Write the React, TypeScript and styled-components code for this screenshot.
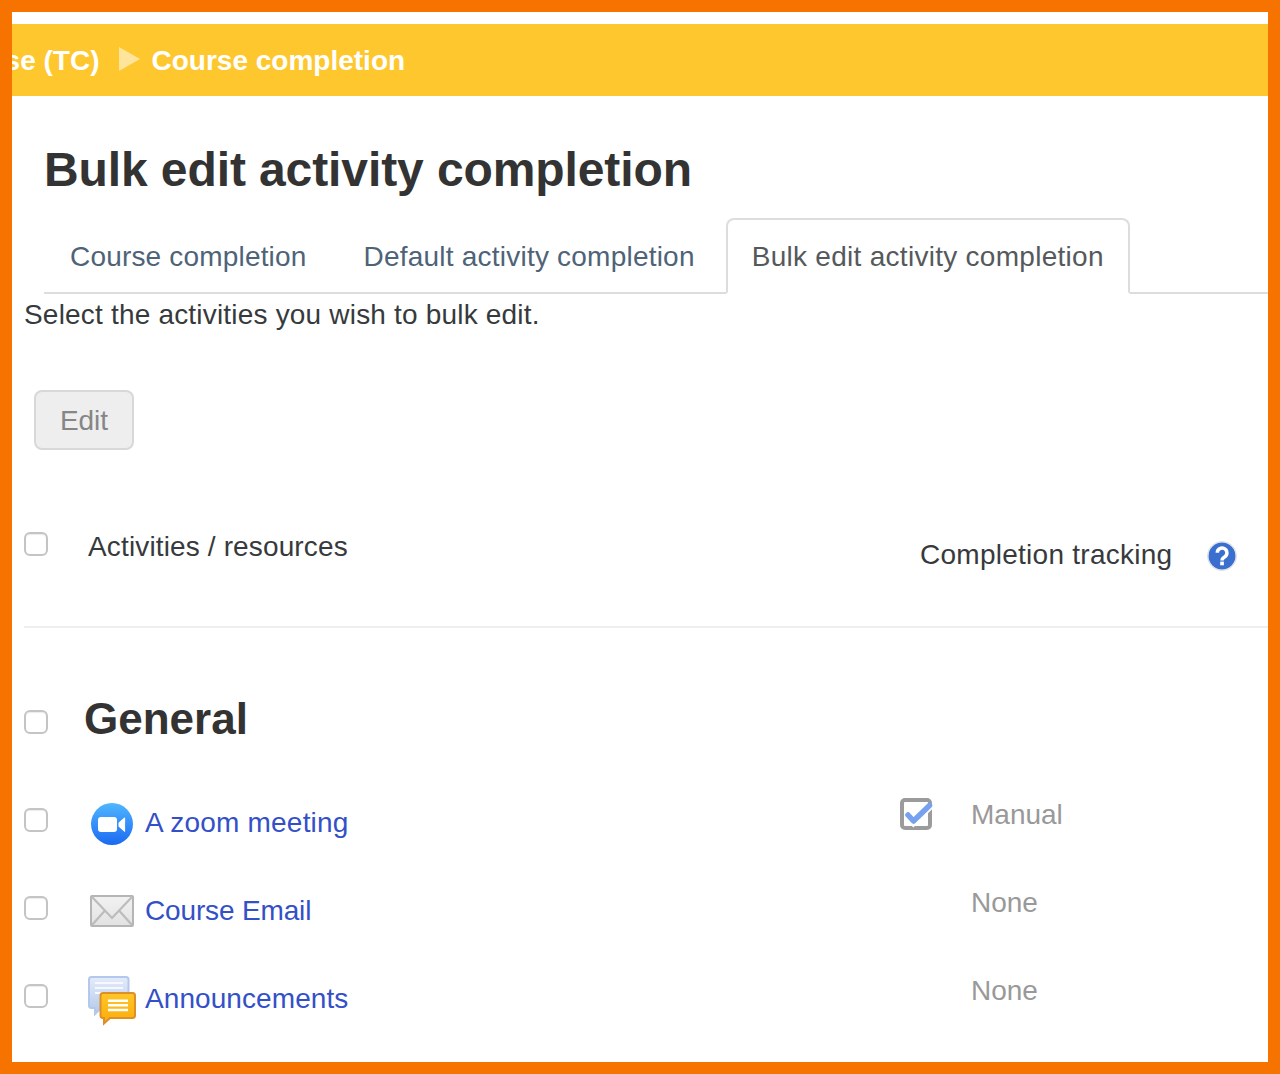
import React from "react";
import styled, { createGlobalStyle } from "styled-components";

const GlobalStyle = createGlobalStyle`
  html, body {
    margin: 0;
    padding: 0;
    background: #fff;
  }
  * {
    box-sizing: border-box;
  }
`;

const Frame = styled.div`
  width: 1280px;
  height: 1074px;
  border: 12px solid #f77300;
  background: #fff;
  overflow: hidden;
  font-family: "Liberation Sans", Arial, sans-serif;
  font-size: 28px;
  line-height: 40px;
  color: #373a3c;
`;

const Breadcrumb = styled.div`
  display: flex;
  align-items: center;
  height: 72px;
  margin-top: 12px;
  padding-top: 2px;
  background: #ffc72e;
  color: #fff;
  font-weight: 700;
  overflow: hidden;
  white-space: nowrap;
`;

const Crumb = styled.span<{ $shift?: number }>`
  margin-left: ${(p) => p.$shift ?? 0}px;
`;

const Separator = styled.span`
  width: 0;
  height: 0;
  margin: 0 12px 5px 19px;
  border-style: solid;
  border-width: 12.5px 0 12.5px 21px;
  border-color: transparent transparent transparent #ffe49b;
`;

const Title = styled.h1`
  margin: 46px 0 0 32px;
  font-size: 48px;
  line-height: 56px;
  font-weight: 700;
  letter-spacing: -0.1px;
  color: #333;
`;

const Tabs = styled.nav`
  display: flex;
  align-items: flex-end;
  height: 76px;
  margin: 20px 0 0 32px;
  border-bottom: 2px solid #ddd;
`;

const Tab = styled.a<{ $active?: boolean; $track: number }>`
  display: block;
  height: 76px;
  margin: 0 5px -2px 0;
  padding: 17px 24px 0;
  border: 2px solid ${(p) => (p.$active ? "#ddd" : "transparent")};
  border-bottom-color: ${(p) => (p.$active ? "#fff" : "transparent")};
  border-radius: 8px 8px 0 0;
  background: ${(p) => (p.$active ? "#fff" : "transparent")};
  color: ${(p) => (p.$active ? "#55595c" : "#4e6378")};
  letter-spacing: ${(p) => p.$track}px;
`;

const Main = styled.main`
  padding-left: 12px;
`;

const Intro = styled.p`
  margin: 0;
  height: 40px;
  padding-top: 1px;
  letter-spacing: 0.19px;
  color: #373a3c;
`;

const EditButton = styled.button`
  display: block;
  width: 100px;
  height: 60px;
  margin: 56px 0 0 10px;
  padding: 2px 0 0;
  border: 2px solid #d8d8d8;
  border-radius: 8px;
  background: #eee;
  color: #868686;
  font: inherit;
`;

const HeaderRow = styled.div`
  display: flex;
  height: 178px;
  border-bottom: 2px solid #eee;
`;

const CheckCell = styled.div<{ $top: number }>`
  flex: none;
  width: 64px;
  padding-top: ${(p) => p.$top}px;
`;

const Box = styled.input.attrs({ type: "checkbox" })`
  display: block;
  width: 24px;
  height: 24px;
  margin: 0;
  appearance: none;
  border: 2px solid #c4c4c4;
  border-radius: 6px;
  background: #fff;
  box-shadow: inset 0 1px 1px rgba(0, 0, 0, 0.08);
`;

const ColumnName = styled.div`
  flex: 1;
  padding-top: 77px;
  letter-spacing: 0.14px;
`;

const ColumnTracking = styled.div`
  flex: none;
  width: 287px;
  padding-top: 85px;
  letter-spacing: 0.26px;
`;

const HelpCell = styled.div`
  flex: none;
  width: 61px;
  padding-top: 91px;
`;

const SectionRow = styled.div`
  display: flex;
  height: 163px;
`;

const SectionName = styled.h3`
  margin: 0 0 0 -4px;
  padding-top: 67px;
  font-size: 44px;
  line-height: 48px;
  font-weight: 700;
  color: #333;
`;

const ActivityRow = styled.div`
  display: flex;
  height: 88px;
`;

const IconCell = styled.div<{ $top: number; $left: number }>`
  flex: none;
  width: 57px;
  padding: ${(p) => p.$top}px 0 0 ${(p) => p.$left}px;
`;

const ActivityLink = styled.a<{ $track: number }>`
  flex: 1;
  padding-top: 12px;
  color: #3350c8;
  letter-spacing: ${(p) => p.$track}px;
`;

const TrackIcon = styled.div`
  flex: none;
  width: 71px;
  padding-top: 7px;
`;

const TrackValue = styled.div`
  flex: none;
  width: 297px;
  padding-top: 4px;
  color: #999;
`;

const IconSvg = styled.svg`
  display: block;
  overflow: visible;
`;

const HelpIcon = () => (
  <IconSvg width="30" height="30" viewBox="0 0 30 30">
    <circle cx="15" cy="15" r="14.5" fill="#fff" stroke="#dcdcdc" />
    <circle cx="15" cy="15" r="13.5" fill="#3a6fd0" />
    <path
      d="M10.3 11.8a4.8 4.8 0 1 1 7.7 3.8c-1.8 1.3-3 1.9-3 3.9"
      fill="none"
      stroke="#fff"
      strokeWidth="3.5"
    />
    <rect x="13.2" y="20.6" width="3.7" height="3.7" fill="#fff" />
  </IconSvg>
);

const ZoomIcon = () => (
  <IconSvg width="42" height="42" viewBox="0 0 42 42">
    <defs>
      <linearGradient id="zoomFill" x1="0" y1="0" x2="0" y2="1">
        <stop offset="0" stopColor="#4fb6ff" />
        <stop offset="1" stopColor="#1c6af2" />
      </linearGradient>
    </defs>
    <circle cx="21" cy="21" r="21" fill="url(#zoomFill)" />
    <rect x="7" y="14" width="19" height="15" rx="3" fill="#fff" />
    <path d="M27.5 19.8l5.6-5c.6-.5 1-.3 1 .4v13c0 .7-.4.9-1 .4l-5.600-5z" fill="#fff" />
  </IconSvg>
);

const MailIcon = () => (
  <IconSvg width="44" height="32" viewBox="0 0 44 32">
    <defs>
      <linearGradient id="mailFill" x1="0" y1="0" x2="0" y2="1">
        <stop offset="0" stopColor="#f2f2f2" />
        <stop offset="1" stopColor="#e2e2e2" />
      </linearGradient>
    </defs>
    <rect x="1" y="1" width="42" height="30" rx="1" fill="url(#mailFill)" stroke="#b5b5b5" strokeWidth="2" />
    <path d="M2 2l20 21L42 2M2 30l13-14.5M42 30L29 15.5" fill="none" stroke="#bcbcbc" strokeWidth="2.2" />
  </IconSvg>
);

const ForumIcon = () => (
  <IconSvg width="48" height="48" viewBox="0 0 48 48">
    <defs>
      <linearGradient id="backBubble" x1="0" y1="0" x2="0" y2="1">
        <stop offset="0" stopColor="#e4ecfa" />
        <stop offset="1" stopColor="#b4c8ea" />
      </linearGradient>
      <linearGradient id="frontBubble" x1="0" y1="0" x2="0" y2="1">
        <stop offset="0" stopColor="#ffc62a" />
        <stop offset="1" stopColor="#fbac0a" />
      </linearGradient>
    </defs>
    <path
      d="M3.5 1H38c1.500 0 2.500 1 2.500 2.500v26c0 1.500-1 2.500-2.500 2.500H13l-6 6v-6H3.500C2 32 1 31 1 29.500v-26C1 2 2 1 3.500 1z"
      fill="url(#backBubble)"
      stroke="#b3c8ec"
      strokeWidth="2"
    />
    <path d="M7 7h28M7 12h28M7 17h28" stroke="#f6f8fd" strokeWidth="2" />
    <path
      d="M15 17h29.500c1.500 0 2.500 1 2.500 2.500v20c0 1.500-1 2.500-2.500 2.500H22l-6 5.500V42h-1c-1.500 0-2.500-1-2.500-2.500v-20c0-1.500 1-2.500 2.500-2.500z"
      fill="url(#frontBubble)"
      stroke="#dd8f28"
      strokeWidth="2"
    />
    <path d="M20 24.700h20M20 29.300h20M20 34h20" stroke="#fff" strokeWidth="2.5" />
  </IconSvg>
);

const CheckedIcon = () => (
  <IconSvg width="32" height="32" viewBox="0 0 32 32">
    <rect x="2" y="2" width="28" height="28" rx="3" fill="#fff" stroke="#9b9b9b" strokeWidth="4" />
    <path d="M8 17l5.500 6L30 7" fill="none" stroke="#fff" strokeWidth="9" />
    <path
      d="M8 17l5.500 6L29.500 7.500"
      fill="none"
      stroke="#76a1ee"
      strokeWidth="5.5"
      strokeLinecap="round"
      strokeLinejoin="round"
    />
  </IconSvg>
);

const activities = [
  { name: "A zoom meeting", icon: <ZoomIcon />, top: 12, left: 3, completion: "Manual", track: 0.2 },
  { name: "Course Email", icon: <MailIcon />, top: 16, left: 2, completion: "None", track: -0.15 },
  { name: "Announcements", icon: <ForumIcon />, top: 9, left: 0, completion: "None", track: 0.08 },
];

export default function App() {
  return (
    <Frame>
      <GlobalStyle />
      <Breadcrumb>
        <Crumb $shift={-136}>Test Course (TC)</Crumb>
        <Separator />
        <Crumb>Course completion</Crumb>
      </Breadcrumb>
      <Title>Bulk edit activity completion</Title>
      <Tabs>
        <Tab $track={0.18}>Course completion</Tab>
        <Tab $track={0.22}>Default activity completion</Tab>
        <Tab $active $track={0.28}>
          Bulk edit activity completion
        </Tab>
      </Tabs>
      <Main>
        <Intro>Select the activities you wish to bulk edit.</Intro>
        <EditButton>Edit</EditButton>
        <HeaderRow>
          <CheckCell $top={82}>
            <Box />
          </CheckCell>
          <ColumnName>Activities / resources</ColumnName>
          <ColumnTracking>Completion tracking</ColumnTracking>
          <HelpCell>
            <HelpIcon />
          </HelpCell>
        </HeaderRow>
        <SectionRow>
          <CheckCell $top={82}>
            <Box />
          </CheckCell>
          <SectionName>General</SectionName>
        </SectionRow>
        {activities.map((a) => (
          <ActivityRow key={a.name}>
            <CheckCell $top={17}>
              <Box />
            </CheckCell>
            <IconCell $top={a.top} $left={a.left}>
              {a.icon}
            </IconCell>
            <ActivityLink $track={a.track}>{a.name}</ActivityLink>
            <TrackIcon>{a.completion === "Manual" && <CheckedIcon />}</TrackIcon>
            <TrackValue>{a.completion}</TrackValue>
          </ActivityRow>
        ))}
      </Main>
    </Frame>
  );
}
